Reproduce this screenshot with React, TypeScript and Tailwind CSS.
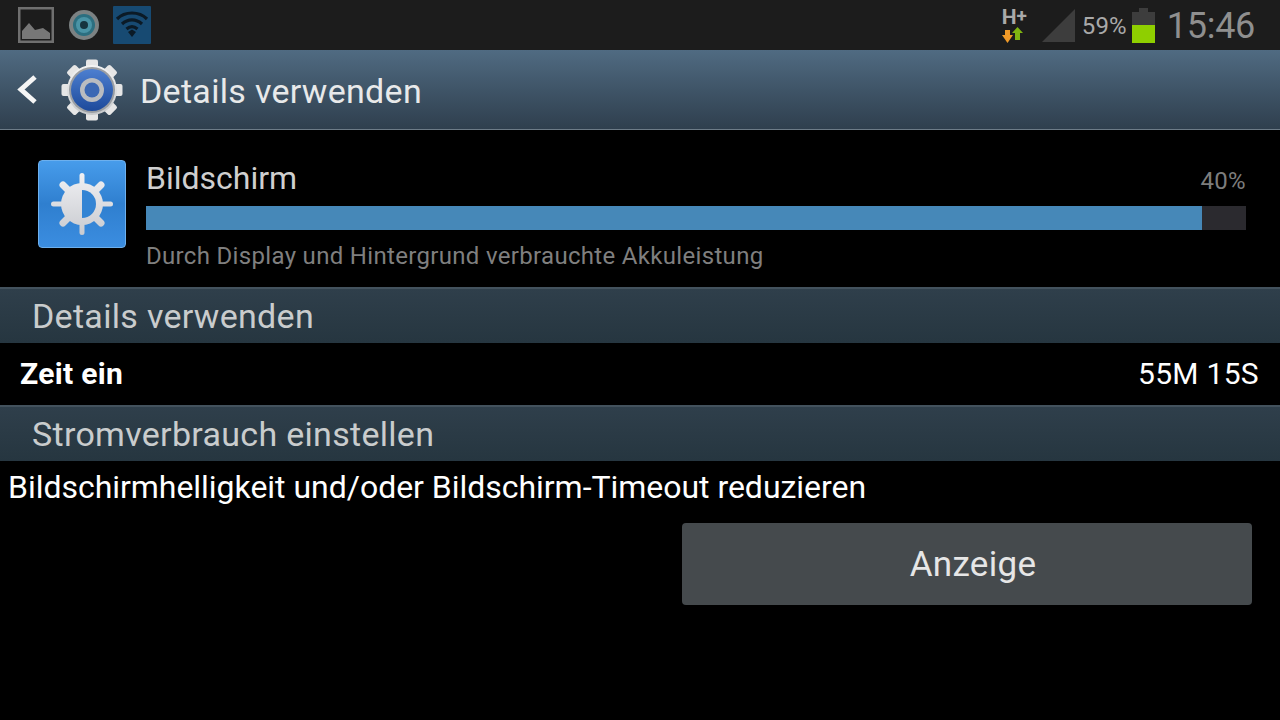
function PictureIcon() {
  return (
    <svg width="36" height="36" viewBox="0 0 36 36">
      <rect x="1.25" y="1.25" width="33.5" height="33.500" fill="none" stroke="#6f6f6f" strokeWidth="2.500" />
      <path d="M4 32V24L11 16L17 23L25 21L32 26V32Z" fill="#777" />
    </svg>
  );
}

function EyeIcon() {
  return (
    <svg width="30" height="30" viewBox="0 0 30 30">
      <circle cx="15" cy="15" r="15" fill="#7c8283" />
      <circle cx="15" cy="15" r="11" fill="#2c6f80" />
      <circle cx="15" cy="15" r="8" fill="#4a94a6" />
      <circle cx="15" cy="15" r="4" fill="#16343f" />
    </svg>
  );
}

function WifiIcon() {
  return (
    <div className="w-[38px] h-[38px] bg-[#174a72] rounded-[1px] flex items-center justify-center">
      <svg width="34" height="30" viewBox="0 0 34 30" fill="none" stroke="#0b1a26" strokeWidth="3.2">
        <path d="M2 9C10 1 24 1 32 9" />
        <path d="M7 14C13 8.500 21 8.500 27 14" />
        <path d="M11.500 19C15 16 19 16 22.500 19" />
        <path d="M13 22L17 19.500L21 22L17 27Z" fill="#0b1a26" stroke="none" />
      </svg>
    </div>
  );
}

function NetworkIcon() {
  return (
    <div className="flex flex-col items-start w-[26px] h-[34px] mt-[2px]">
      <div className="flex items-start text-[#a9a9a9] font-bold h-[18px]">
        <span className="text-[21px] leading-[17px]">H</span>
        <span className="text-[19px] leading-[13px]">+</span>
      </div>
      <svg width="22" height="16" viewBox="0 0 22 16">
        <path d="M3 3H8V8H11L5.500 16L0 8H3Z" fill="#f09a28" />
        <path d="M13 13V6H10L15.500 0L21 6H18V13Z" fill="#7fb511" />
      </svg>
    </div>
  );
}

function BatteryIcon() {
  return (
    <div className="flex flex-col items-center w-[23px] h-[35px]">
      <div className="w-[9px] h-[4px] bg-[#3d3d3d]" />
      <div className="w-[23px] h-[13px] bg-[#3d3d3d]" />
      <div className="w-[23px] h-[18px] bg-[#8fcf00]" />
    </div>
  );
}

function GearIcon() {
  const teeth = [0, 45, 90, 135, 180, 225, 270, 315];
  return (
    <svg width="62" height="62" viewBox="0 0 62 62">
      <defs>
        <linearGradient id="gear" x1="0" y1="0" x2="0" y2="1">
          <stop offset="0" stopColor="#f4f4f4" />
          <stop offset="1" stopColor="#c6c8ca" />
        </linearGradient>
        <linearGradient id="ring" x1="0" y1="0" x2="0" y2="1">
          <stop offset="0" stopColor="#4d7fd0" />
          <stop offset="1" stopColor="#1d4a9b" />
        </linearGradient>
      </defs>
      {teeth.map((a) => (
        <rect key={a} x="25" y="0.500" width="12" height="12" rx="2" fill="#e6e6e6" transform={`rotate(${a} 31 31)`} />
      ))}
      <circle cx="31" cy="31" r="25" fill="url(#gear)" />
      <circle cx="31" cy="31" r="23" fill="#9a9ea3" />
      <circle cx="31" cy="31" r="21" fill="url(#ring)" />
      <circle cx="31" cy="31" r="12" fill="#b9bcc0" />
      <circle cx="31" cy="31" r="7.500" fill="#3b68b4" />
    </svg>
  );
}

function ScreenIcon() {
  return (
    <div className="w-[88px] h-[88px] rounded-[4px] border border-[#6db0ee] bg-gradient-to-b from-[#479ceb] via-[#2f7fcf] to-[#3b8de0] flex items-center justify-center">
      <svg width="62" height="62" viewBox="0 0 62 62">
        <defs>
          <linearGradient id="sun" gradientUnits="userSpaceOnUse" x1="0" y1="0" x2="0" y2="62">
            <stop offset="0" stopColor="#f0f0f3" />
            <stop offset="1" stopColor="#c9cbd0" />
          </linearGradient>
        </defs>
        <rect x="28.500" y="0" width="5" height="62" rx="2.500" fill="url(#sun)" />
        <rect x="0" y="28.500" width="62" height="5" rx="2.500" fill="url(#sun)" />
        <path d="M12 12L50 50M50 12L12 50" stroke="url(#sun)" strokeWidth="7" strokeLinecap="round" />
        <circle cx="31" cy="31" r="21" fill="url(#sun)" />
        <path d="M31 17A14 14 0 0 1 31 45Z" fill="#3384d4" />
      </svg>
    </div>
  );
}

function SectionHeader({ title }: { title: string }) {
  return (
    <div className="h-[56px] border-t-2 border-[#43525d] bg-gradient-to-b from-[#2f3f4b] to-[#263640] pl-[32px] flex items-center text-[34px] text-[#c9cccd] tracking-[0.3px]">
      {title}
    </div>
  );
}

export default function App() {
  return (
    <div className="w-[1280px] h-[720px] bg-black overflow-hidden font-['Roboto',sans-serif]">
      {/* status bar */}
      <div className="h-[50px] bg-[#1c1c1c] flex items-center pl-[18px] pr-[25px]">
        <div className="flex items-center">
          <PictureIcon />
          <div className="ml-[15px]">
            <EyeIcon />
          </div>
          <div className="ml-[14px]">
            <WifiIcon />
          </div>
        </div>
        <div className="ml-auto flex items-center">
          <NetworkIcon />
          <svg width="33" height="33" viewBox="0 0 33 33" className="ml-[14px] mt-[1px]">
            <path d="M0 33L33 0V33Z" fill="#3d3d3d" />
          </svg>
          <span className="ml-[7px] mt-[2px] text-[24px] text-[#a9a9a9] tracking-[0.2px]">59%</span>
          <div className="ml-[5px]">
            <BatteryIcon />
          </div>
          <span className="ml-[12px] mt-[2px] text-[36px] text-[#8f8f8f] tracking-[-0.3px]">15:46</span>
        </div>
      </div>

      {/* action bar */}
      <div className="h-[80px] border-b border-[#6d7c88] bg-gradient-to-b from-[#506b82] to-[#2f3f4e] flex items-center">
        <svg width="22" height="32" viewBox="0 0 22 32" className="ml-[16px]">
          <path d="M19 3L5 15.500L19 28" fill="none" stroke="#f5f5f5" strokeWidth="5" />
        </svg>
        <div className="ml-[23px]">
          <GearIcon />
        </div>
        <span className="ml-[17px] mt-[4px] text-[34px] text-[#e8e9ea] tracking-[0.3px]">Details verwenden</span>
      </div>

      {/* usage summary */}
      <div className="h-[157px] flex pl-[38px] pr-[34px] pt-[30px]">
        <ScreenIcon />
        <div className="ml-[20px] flex-1">
          <div className="h-[36px] flex items-end justify-between">
            <span className="text-[32px] leading-[36px] text-[#cfcfcf]">Bildschirm</span>
            <span className="text-[24px] leading-[30px] text-[#7d7d7d] tracking-[0.3px]">40%</span>
          </div>
          <div className="mt-[10px] h-[24px] bg-[#2b2a2f]">
            <div className="h-full bg-[#4688b8]" style={{ width: `${(1056 / 1100) * 100}%` }} />
          </div>
          <div className="mt-[10px] text-[24px] leading-[32px] text-[#7f7f7f] tracking-[0.32px]">
            Durch Display und Hintergrund verbrauchte Akkuleistung
          </div>
        </div>
      </div>

      <SectionHeader title="Details verwenden" />

      <div className="h-[62px] pl-[20px] pr-[21px] pb-[2px] flex items-center justify-between text-[30px] text-white tracking-[0.3px]">
        <span className="font-bold">Zeit ein</span>
        <span>55M 15S</span>
      </div>

      <SectionHeader title="Stromverbrauch einstellen" />

      <div className="pl-[8px] h-[52px] flex items-center text-[32px] text-white tracking-[-0.03px]">
        Bildschirmhelligkeit und/oder Bildschirm-Timeout reduzieren
      </div>
      <div className="mt-[10px] pr-[28px] flex justify-end">
        <button className="w-[570px] h-[82px] rounded-[4px] bg-[#454a4d] pl-[12px] pt-[2px] text-[35px] text-[#e6e6e6] tracking-[0.3px]">
          Anzeige
        </button>
      </div>
    </div>
  );
}
